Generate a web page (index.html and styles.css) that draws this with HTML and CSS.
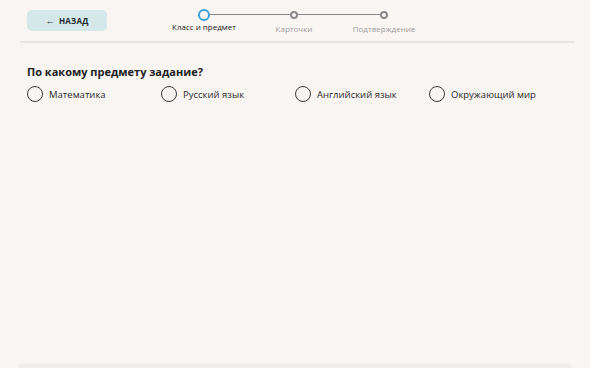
FILE: index.html
```html
<!DOCTYPE html>
<html lang="ru">
    <head>
        <meta charset="UTF-8" />
        <meta name="viewport" content="width=device-width, initial-scale=1.0" />
        <title>Новое задание</title>
        <link rel="stylesheet" href="styles.css">
    </head>
    <body>
        <header class="topbar">
            <button class="backButton"><span class="arrow">&larr;</span> НАЗАД</button>

            <ol class="stepper">
                <li class="step active">
                    <span class="dot"></span>
                    <span class="stepLabel">Класс и предмет</span>
                </li>
                <li class="step">
                    <span class="dot"></span>
                    <span class="stepLabel">Карточки</span>
                </li>
                <li class="step">
                    <span class="dot"></span>
                    <span class="stepLabel">Подтверждение</span>
                </li>
            </ol>
        </header>

        <main class="content">
            <h2 class="question">По какому предмету задание?</h2>
            <div class="options">
                <label class="option"><span class="radio"></span>Математика</label>
                <label class="option"><span class="radio"></span>Русский язык</label>
                <label class="option"><span class="radio"></span>Английский язык</label>
                <label class="option"><span class="radio"></span>Окружающий мир</label>
            </div>
        </main>

        <footer class="bottomPanel"></footer>
    </body>
</html>
```

FILE: styles.css
```css
body {
    font-family: "Open Sans", Arial, sans-serif;
    margin: 0;
    padding: 0;
    height: 368px;
    background-color: #f8f5f3;
    color: #222;
    display: flex;
    flex-direction: column;
    overflow: hidden;
}

.topbar {
    display: flex;
    align-items: flex-start;
    margin: 0 16px 0 20px;
    padding: 10px 0 0 7px;
    height: 31px;
    border-bottom: 2px solid #e7e5e2;
}

.backButton {
    width: 80px;
    height: 21px;
    padding: 0;
    border: none;
    border-radius: 5px;
    background-color: #d4e8e9;
    color: #1d2b2d;
    font-family: "Open Sans", Arial, sans-serif;
    font-size: 8px;
    font-weight: 700;
    letter-spacing: 0.2px;
    cursor: pointer;
}

.arrow {
    font-size: 9px;
    margin-right: 2px;
}

.stepper {
    position: relative;
    display: flex;
    list-style: none;
    margin: -1px 0 0 52px;
    padding: 0;
}

.stepper::before {
    content: "";
    position: absolute;
    top: 5px;
    left: 45px;
    right: 45px;
    height: 1px;
    background-color: #8a8a8d;
}

.step {
    position: relative;
    display: flex;
    flex-direction: column;
    align-items: center;
    width: 90px;
}

.dot {
    box-sizing: border-box;
    width: 8px;
    height: 8px;
    margin-top: 2px;
    border: 2px solid #8a8a8d;
    border-radius: 50%;
    background-color: #f8f5f3;
}

.step.active .dot {
    width: 12px;
    height: 12px;
    margin-top: 0;
    border-color: #3aa2d8;
}

.stepLabel {
    margin-top: 0;
    font-size: 8px;
    color: #a0a0a0;
    white-space: nowrap;
}

.step:not(.active) .stepLabel {
    margin-top: 4px;
}

.step.active .stepLabel {
    color: #222;
}

.content {
    flex: 1;
    padding: 21px 0 0 27px;
}

.question {
    margin: 0 0 7px 0;
    font-size: 11px;
    font-weight: 700;
}

.options {
    display: flex;
}

.option {
    display: flex;
    align-items: center;
    width: 134px;
    font-size: 9.5px;
    color: #2a2a2a;
    cursor: pointer;
}

.radio {
    box-sizing: border-box;
    width: 16px;
    height: 16px;
    margin-right: 6px;
    border: 1.5px solid #3a3a3a;
    border-radius: 50%;
}

.bottomPanel {
    height: 4px;
    margin: 0 18px;
    background-color: #f0eeec;
    border-radius: 4px 4px 0 0;
    box-shadow: 0 -1px 2px rgba(0, 0, 0, 0.02);
}
```
